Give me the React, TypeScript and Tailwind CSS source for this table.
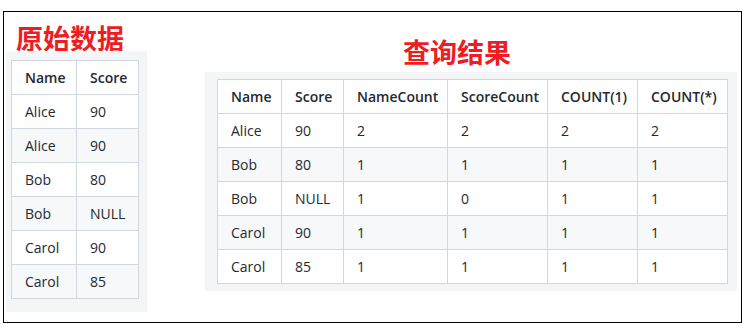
const source = [
  ['Alice', '90'],
  ['Alice', '90'],
  ['Bob', '80'],
  ['Bob', 'NULL'],
  ['Carol', '90'],
  ['Carol', '85'],
];

const result = [
  ['Alice', '90', '2', '2', '2', '2'],
  ['Bob', '80', '1', '1', '1', '1'],
  ['Bob', 'NULL', '1', '0', '1', '1'],
  ['Carol', '90', '1', '1', '1', '1'],
  ['Carol', '85', '1', '1', '1', '1'],
];

type TableProps = {
  headers: string[];
  widths: string[];
  rows: string[][];
};

function DataTable({ headers, widths, rows }: TableProps) {
  return (
    <table className="table-fixed border-collapse bg-white text-[14px] text-[#24292f]">
      <colgroup>
        {widths.map((w, i) => (
          <col key={i} className={w} />
        ))}
      </colgroup>
      <thead>
        <tr className="h-[34px]">
          {headers.map((h) => (
            <th key={h} className="border border-[#d0d7de] pl-[13px] text-left font-semibold whitespace-nowrap">
              {h}
            </th>
          ))}
        </tr>
      </thead>
      <tbody>
        {rows.map((row, r) => (
          <tr key={r} className="h-[34px] even:bg-[#f6f8fa]">
            {row.map((cell, c) => (
              <td key={c} className="border border-[#d0d7de] pl-[13px] whitespace-nowrap">
                {cell}
              </td>
            ))}
          </tr>
        ))}
      </tbody>
    </table>
  );
}

export default function App() {
  return (
    <div className="w-[748px] h-[329px] bg-white pt-[11px] pl-[3px] font-['Open_Sans','Noto_Sans',sans-serif]">
      <div className="w-[739px] h-[312px] border border-black flex items-start">

        {/* 原始数据 */}
        <div className="ml-[2px] flex flex-col">
          <div className="mt-[11px] h-[28px] leading-[30px] pl-[10px] text-[27px] font-bold text-[#ee1d24] font-['Noto_Sans_CJK_SC',sans-serif]">
            原始数据
          </div>
          <div className="bg-[#f4f5f7] pl-[5px] pt-[9px] pr-[8px] pb-[13px]">
            <DataTable headers={['Name', 'Score']} widths={['w-[65px]', 'w-[62px]']} rows={source} />
          </div>
        </div>

        {/* 查询结果 */}
        <div className="ml-[58px] mt-[25px] flex flex-col">
          <div className="h-[28px] leading-[30px] mb-[7px] pl-[198px] text-[27px] font-bold text-[#ee1d24] font-['Noto_Sans_CJK_SC',sans-serif]">
            查询结果
          </div>
          <div className="bg-[#f4f5f7] pl-[12px] pt-[7px] pr-[9px] pb-[7px]">
            <DataTable
              headers={['Name', 'Score', 'NameCount', 'ScoreCount', 'COUNT(1)', 'COUNT(*)']}
              widths={['w-[64px]', 'w-[62px]', 'w-[104px]', 'w-[100px]', 'w-[90px]', 'w-[90px]']}
              rows={result}
            />
          </div>
        </div>

      </div>
    </div>
  );
}
